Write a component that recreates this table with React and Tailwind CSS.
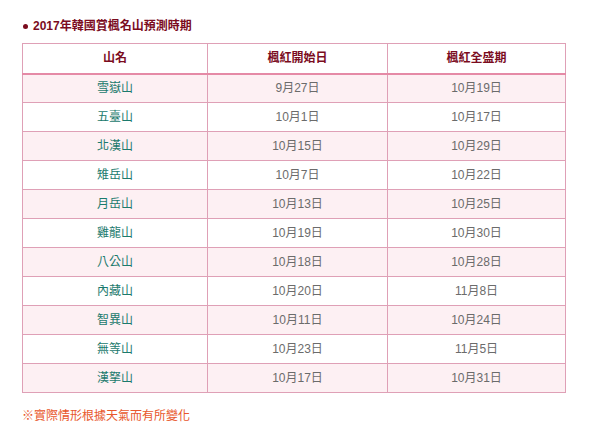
import React from 'react';

const rows = [
  ['雪嶽山', '9月27日', '10月19日'],
  ['五臺山', '10月1日', '10月17日'],
  ['北漢山', '10月15日', '10月29日'],
  ['雉岳山', '10月7日', '10月22日'],
  ['月岳山', '10月13日', '10月25日'],
  ['雞龍山', '10月19日', '10月30日'],
  ['八公山', '10月18日', '10月28日'],
  ['內藏山', '10月20日', '11月8日'],
  ['智異山', '10月11日', '10月24日'],
  ['無等山', '10月23日', '11月5日'],
  ['漢拏山', '10月17日', '10月31日'],
];

const App = () => {
  return (
    <div
      className="bg-white w-[597px] h-[434px] pl-[22px] pt-[17px] text-[12px]"
      style={{ fontFamily: '"Liberation Sans", "Noto Sans CJK TC", sans-serif' }}
    >
      <div className="flex items-center h-[18px] font-bold text-[#7b0c1e]">
        <span className="w-[5px] h-[5px] rounded-full bg-[#7b0c1e] ml-[1px] mr-[5px]" />
        2017年韓國賞楓名山預測時期
      </div>
      <table className="mt-[8px] w-[544px] border-collapse border border-[#dfa0b6] text-center">
        <thead>
          <tr className="h-[30px] border-b-2 border-[#e58aa6]">
            <th className="w-[185px] border-r border-[#dfa0b6] font-bold text-[#7b0c1e]">山名</th>
            <th className="w-[180px] border-r border-[#dfa0b6] font-bold text-[#7b0c1e]">楓紅開始日</th>
            <th className="font-bold text-[#7b0c1e]">楓紅全盛期</th>
          </tr>
        </thead>
        <tbody>
          {rows.map((r, i) => (
            <tr key={r[0]} className={`h-[29px] border-b border-[#dfa0b6] ${i % 2 === 0 ? 'bg-[#fdf0f3]' : 'bg-white'}`}>
              <td className="border-r border-[#dfa0b6] text-[#1b7a6d]">{r[0]}</td>
              <td className="border-r border-[#dfa0b6] text-[#6b6b6b]">{r[1]}</td>
              <td className="text-[#6b6b6b]">{r[2]}</td>
            </tr>
          ))}
        </tbody>
      </table>
      <p className="mt-[14px] text-[#e8572c]">※實際情形根據天氣而有所變化</p>
    </div>
  );
};

export default App;
